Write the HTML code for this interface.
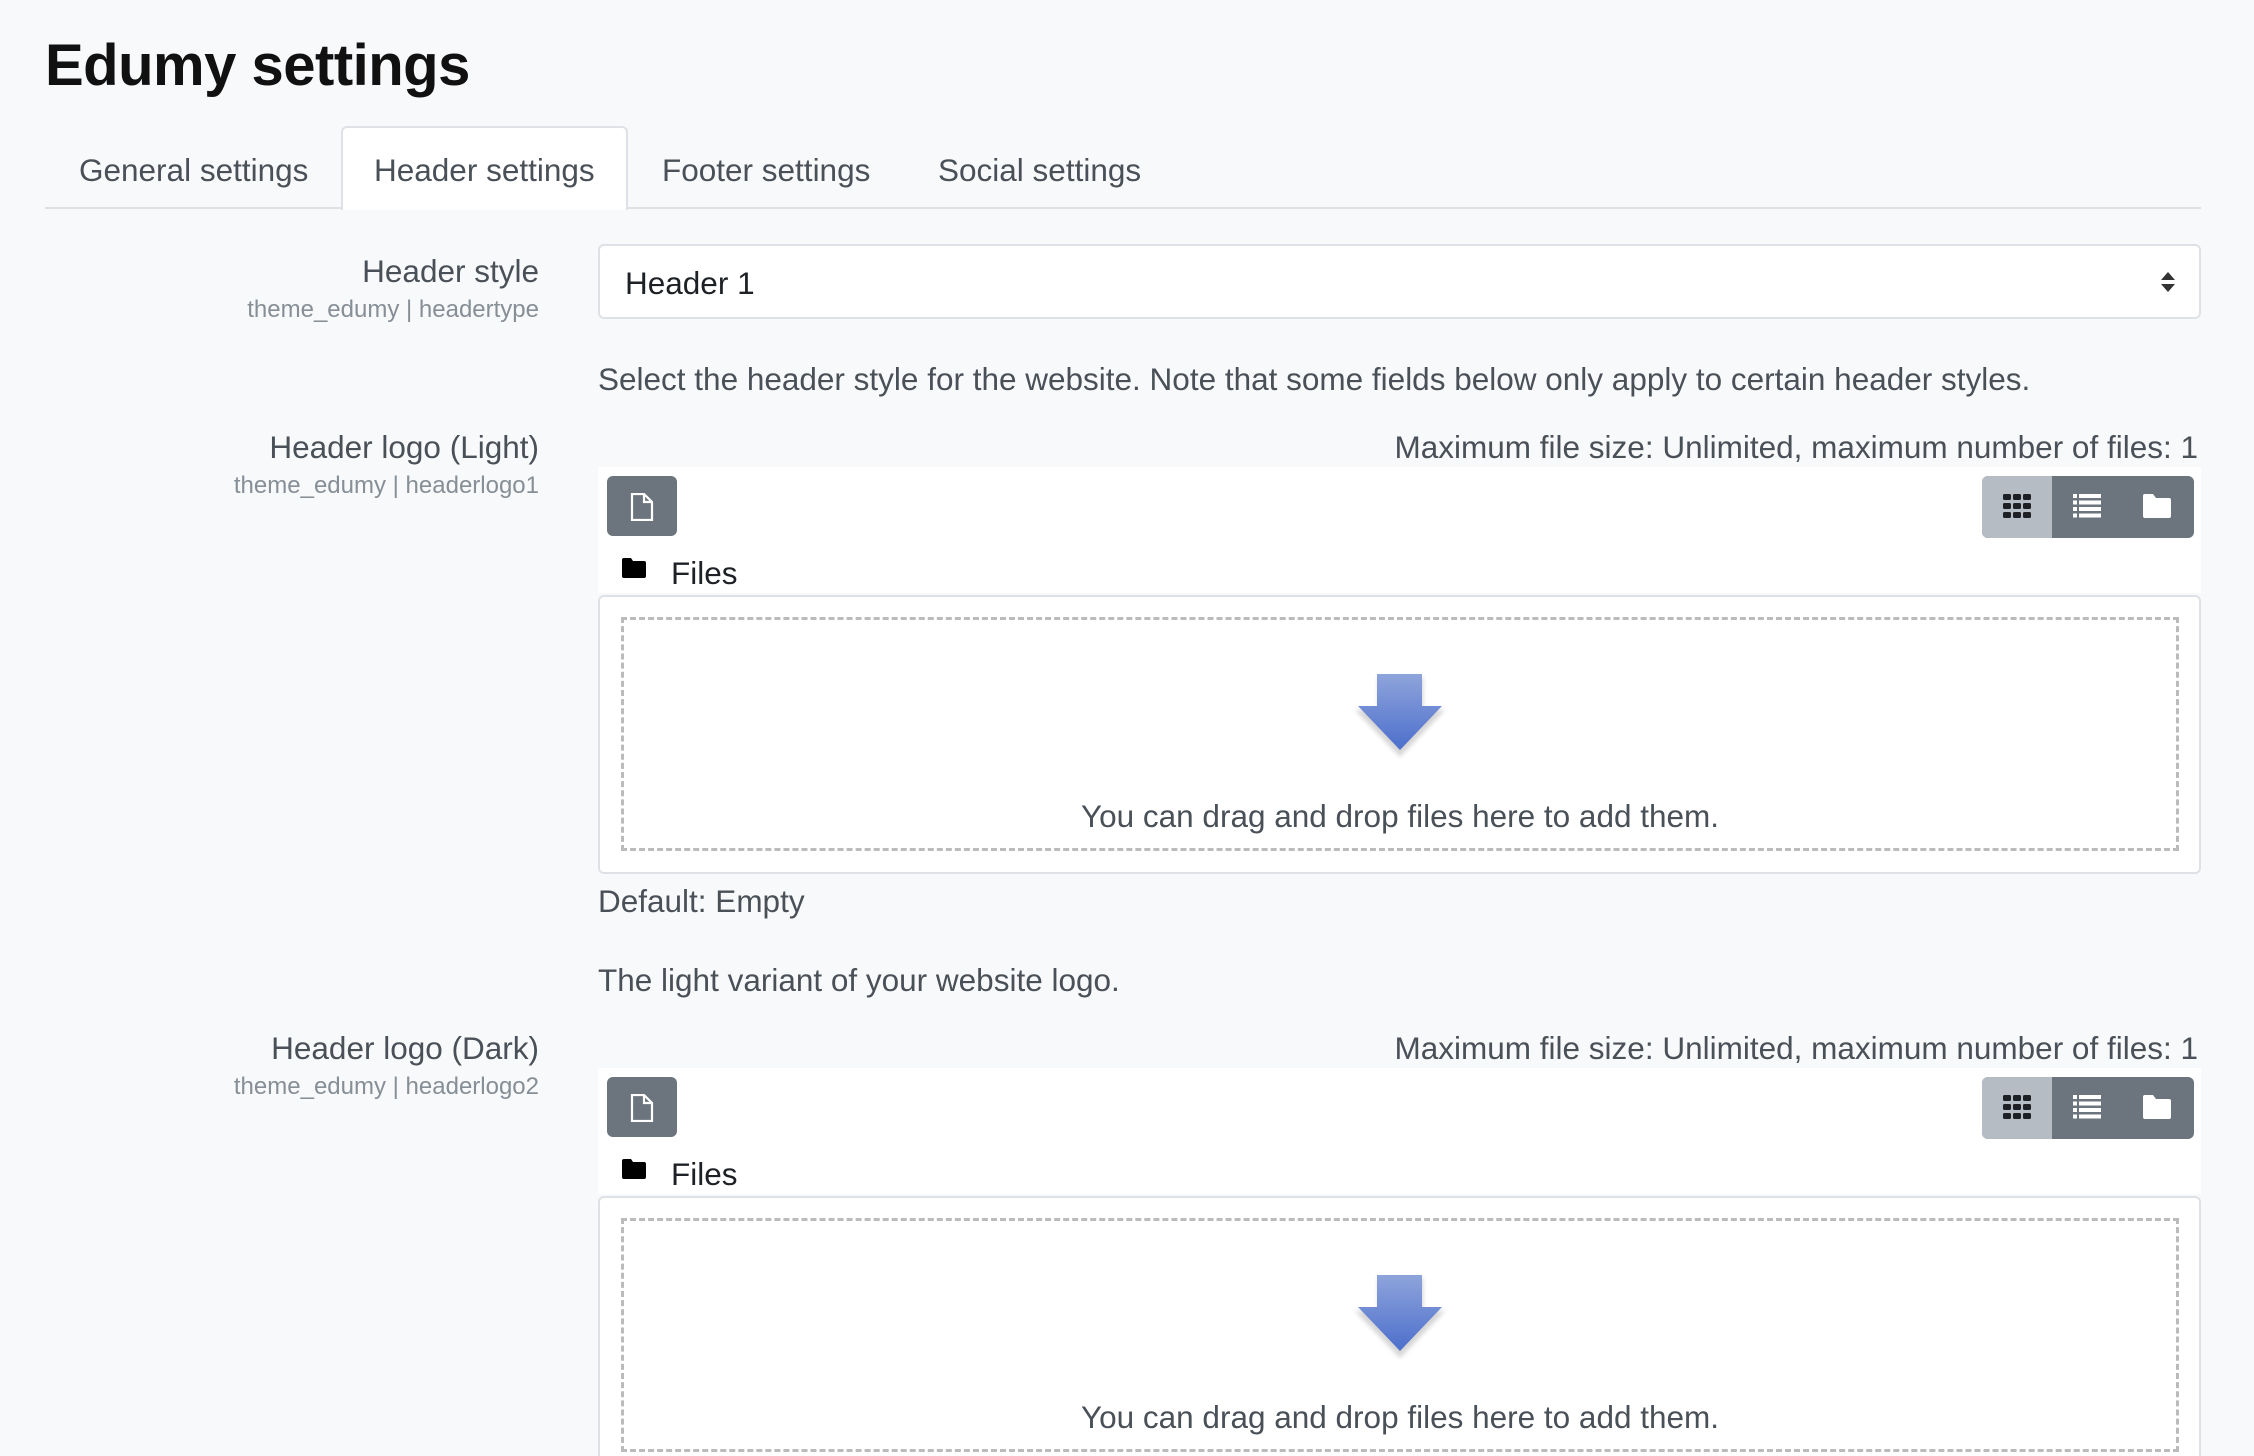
<!DOCTYPE html>
<html><head><meta charset="utf-8"><style>
*{box-sizing:border-box;margin:0;padding:0}
html,body{width:2254px;height:1456px;overflow:hidden}
body{background:#f8f9fa;font-family:"Liberation Sans",sans-serif;color:#495057}
#w{position:relative;width:2254px;height:1456px;overflow:hidden}
.a{position:absolute;white-space:nowrap}
h1{position:absolute;left:45px;top:32px;font-size:58px;font-weight:bold;color:#111;letter-spacing:-0.5px}
.tab{font-size:31.5px;top:152px;color:#495057}
.lbl{font-size:31.5px;text-align:right;right:1715px}
.sub{font-size:24px;color:#868e96;text-align:right;right:1715px}
.t30{font-size:31.5px}
.btn{position:absolute;background:#6c757d;border-radius:6px}
</style></head><body><div id="w">
<h1>Edumy settings</h1>
<div class="a" style="left:45px;top:207px;width:2156px;height:2px;background:#dee2e6"></div>
<div class="a" style="left:341px;top:126px;width:287px;height:84px;background:#fff;border:2px solid #dee2e6;border-bottom:none;border-radius:6px 6px 0 0"></div>
<div class="a tab" style="left:79px">General settings</div>
<div class="a tab" style="left:374px">Header settings</div>
<div class="a tab" style="left:662px">Footer settings</div>
<div class="a tab" style="left:938px">Social settings</div>

<div class="a lbl" style="top:253px">Header style</div>
<div class="a sub" style="top:296px">theme_edumy | headertype</div>
<div class="a" style="left:598px;top:244px;width:1603px;height:75px;background:#fff;border:2px solid #dee2e6;border-radius:6px"></div>
<div class="a t30" style="left:625px;top:265px;color:#1d2125">Header 1</div>
<svg class="a" style="left:2160px;top:271px" width="16" height="22"><path d="M8 1 L15 9 H1Z M8 21 L15 13 H1Z" fill="#333"/></svg>
<div class="a t30" style="left:598px;top:361px">Select the header style for the website. Note that some fields below only apply to certain header styles.</div>

<div class="a lbl" style="top:429px">Header logo (Light)</div>
<div class="a sub" style="top:472px">theme_edumy | headerlogo1</div>
<div class="a t30" style="right:56px;top:429px">Maximum file size: Unlimited, maximum number of files: 1</div>
<div class="a" style="left:598px;top:467px;width:1603px;height:126px;background:#fff"></div>
<div class="btn" style="left:607px;top:476px;width:70px;height:60px"></div>
<svg class="a" style="left:630px;top:493px" width="24" height="28"><path d="M2 1 H14 L22 9 V27 H2Z M14 1 V9 H22" fill="none" stroke="#fff" stroke-width="2.2"/></svg>
<div class="btn" style="left:1982px;top:476px;width:212px;height:62px"></div>
<div class="a" style="left:1982px;top:476px;width:70px;height:62px;background:#b5bcc4;border-radius:6px 0 0 6px"></div>
<svg class="a" style="left:2003px;top:494px" width="28" height="24"><g fill="#1d2125"><rect x="0" y="0" width="8" height="6" rx="1.5"/><rect x="10" y="0" width="8" height="6" rx="1.5"/><rect x="20" y="0" width="8" height="6" rx="1.5"/><rect x="0" y="9" width="8" height="6" rx="1.5"/><rect x="10" y="9" width="8" height="6" rx="1.5"/><rect x="20" y="9" width="8" height="6" rx="1.5"/><rect x="0" y="18" width="8" height="6" rx="1.5"/><rect x="10" y="18" width="8" height="6" rx="1.5"/><rect x="20" y="18" width="8" height="6" rx="1.5"/></g></svg>
<svg class="a" style="left:2073px;top:494px" width="28" height="24"><g fill="#fff"><rect x="0" y="0" width="4" height="4"/><rect x="6" y="0" width="22" height="4"/><rect x="0" y="6.5" width="4" height="4"/><rect x="6" y="6.5" width="22" height="4"/><rect x="0" y="13" width="4" height="4"/><rect x="6" y="13" width="22" height="4"/><rect x="0" y="19.5" width="4" height="4"/><rect x="6" y="19.5" width="22" height="4"/></g></svg>
<svg class="a" style="left:2143px;top:494px" width="28" height="24"><path d="M2 0 H10 L13 4 H26 Q28 4 28 6 V22 Q28 24 26 24 H2 Q0 24 0 22 V2 Q0 0 2 0Z" fill="#fff"/></svg>
<svg class="a" style="left:622px;top:558px" width="24" height="20"><path d="M2 0 H9 L11 3 H22 Q24 3 24 5 V18 Q24 20 22 20 H2 Q0 20 0 18 V2 Q0 0 2 0Z" fill="#000"/></svg>
<div class="a t30" style="left:671px;top:555px;color:#1d2125">Files</div>
<div class="a" style="left:598px;top:595px;width:1603px;height:279px;background:#fff;border:2px solid #dee2e6;border-radius:6px"></div>
<div class="a" style="left:621px;top:617px;width:1558px;height:234px;border:3px dashed #bbb"></div>
<svg class="a" style="left:1345px;top:672px" width="110" height="90"><defs><linearGradient id="g" x1="0" y1="0" x2="0" y2="1"><stop offset="0" stop-color="#8ea4db"/><stop offset="1" stop-color="#4d6fcc"/></linearGradient><filter id="s"><feGaussianBlur stdDeviation="2"/></filter></defs><path d="M33 5 H78 V38 H100 L55 85 L10 38 H33Z" fill="#999" opacity="0.4" filter="url(#s)"/><path d="M32 2 H77 V34 H97 L55 78 L13 34 H32Z" fill="url(#g)"/></svg>
<div class="a t30" style="left:0;width:2800px;top:798px;text-align:center">You can drag and drop files here to add them.</div>
<div class="a t30" style="left:598px;top:883px">Default: Empty</div>
<div class="a t30" style="left:598px;top:962px">The light variant of your website logo.</div>

<div style="position:absolute;left:0;top:601px;width:2254px;height:855px;overflow:hidden">
<div class="a lbl" style="top:429px">Header logo (Dark)</div>
<div class="a sub" style="top:472px">theme_edumy | headerlogo2</div>
<div class="a t30" style="right:56px;top:429px">Maximum file size: Unlimited, maximum number of files: 1</div>
<div class="a" style="left:598px;top:467px;width:1603px;height:126px;background:#fff"></div>
<div class="btn" style="left:607px;top:476px;width:70px;height:60px"></div>
<svg class="a" style="left:630px;top:493px" width="24" height="28"><path d="M2 1 H14 L22 9 V27 H2Z M14 1 V9 H22" fill="none" stroke="#fff" stroke-width="2.2"/></svg>
<div class="btn" style="left:1982px;top:476px;width:212px;height:62px"></div>
<div class="a" style="left:1982px;top:476px;width:70px;height:62px;background:#b5bcc4;border-radius:6px 0 0 6px"></div>
<svg class="a" style="left:2003px;top:494px" width="28" height="24"><g fill="#1d2125"><rect x="0" y="0" width="8" height="6" rx="1.5"/><rect x="10" y="0" width="8" height="6" rx="1.5"/><rect x="20" y="0" width="8" height="6" rx="1.5"/><rect x="0" y="9" width="8" height="6" rx="1.5"/><rect x="10" y="9" width="8" height="6" rx="1.5"/><rect x="20" y="9" width="8" height="6" rx="1.5"/><rect x="0" y="18" width="8" height="6" rx="1.5"/><rect x="10" y="18" width="8" height="6" rx="1.5"/><rect x="20" y="18" width="8" height="6" rx="1.5"/></g></svg>
<svg class="a" style="left:2073px;top:494px" width="28" height="24"><g fill="#fff"><rect x="0" y="0" width="4" height="4"/><rect x="6" y="0" width="22" height="4"/><rect x="0" y="6.5" width="4" height="4"/><rect x="6" y="6.5" width="22" height="4"/><rect x="0" y="13" width="4" height="4"/><rect x="6" y="13" width="22" height="4"/><rect x="0" y="19.5" width="4" height="4"/><rect x="6" y="19.5" width="22" height="4"/></g></svg>
<svg class="a" style="left:2143px;top:494px" width="28" height="24"><path d="M2 0 H10 L13 4 H26 Q28 4 28 6 V22 Q28 24 26 24 H2 Q0 24 0 22 V2 Q0 0 2 0Z" fill="#fff"/></svg>
<svg class="a" style="left:622px;top:558px" width="24" height="20"><path d="M2 0 H9 L11 3 H22 Q24 3 24 5 V18 Q24 20 22 20 H2 Q0 20 0 18 V2 Q0 0 2 0Z" fill="#000"/></svg>
<div class="a t30" style="left:671px;top:555px;color:#1d2125">Files</div>
<div class="a" style="left:598px;top:595px;width:1603px;height:279px;background:#fff;border:2px solid #dee2e6;border-radius:6px"></div>
<div class="a" style="left:621px;top:617px;width:1558px;height:234px;border:3px dashed #bbb"></div>
<svg class="a" style="left:1345px;top:672px" width="110" height="90"><path d="M33 5 H78 V38 H100 L55 85 L10 38 H33Z" fill="#999" opacity="0.4" filter="url(#s)"/><path d="M32 2 H77 V34 H97 L55 78 L13 34 H32Z" fill="url(#g)"/></svg>
<div class="a t30" style="left:0;width:2800px;top:798px;text-align:center">You can drag and drop files here to add them.</div>
</div>
</div></body></html>
